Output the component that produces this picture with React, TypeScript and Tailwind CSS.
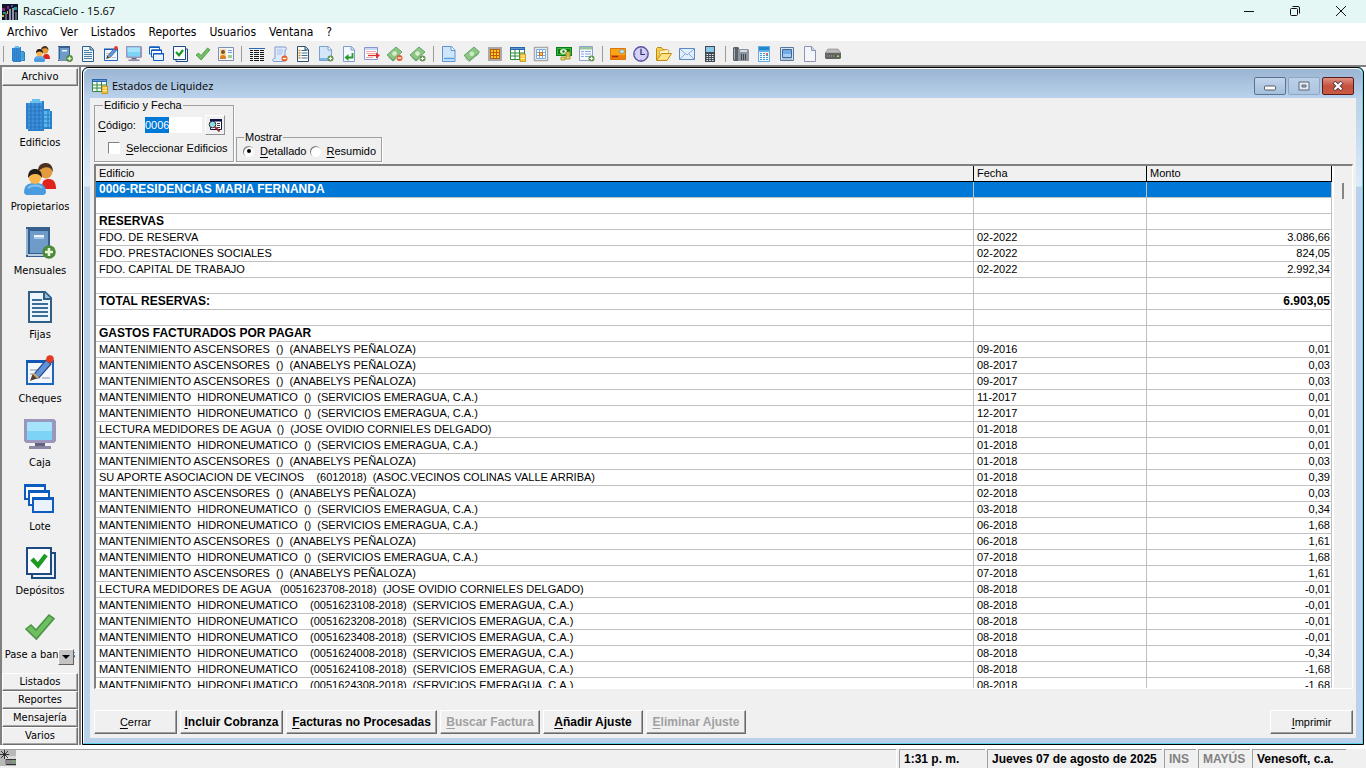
import React, { useEffect, useRef, useState } from 'react';

type IconName = keyof typeof ICONS;

// All drawings sit on a 16x16 grid; the sidebar shows them at double size
const ICONS = {
  building: (
    <>
      <path d="M1 2h2V1h1V0h4v1h2v4h3v1h1v9h-4v1H2v-1H1z" fill="#2e7fca" />
      <path d="M2 2h7v13H2z" fill="#3c93dd" />
      <path d="M4 0h4v1H4zM3 1h6v1H3z" fill="#6cc0f0" />
      <path d="M10 6h3v8h-3z" fill="#5ab8ee" />
      <path d="M2 4h7M2 6h7M2 8h7M2 10h7M2 12h7M2 14h7" stroke="#2b74bd" strokeWidth=".5" />
      <path d="M3.500 2v13M5.500 2v13M7.500 2v13" stroke="#2570b8" strokeWidth=".5" />
      <path d="M10 8h4M10 10h4M10 12h4M12 6v9" stroke="#2b7ec0" strokeWidth=".6" />
    </>
  ),
  people: (
    <>
      <path d="M9 12c0-3 1-4 3.500-4S16 10 16 13h-5z" fill="#e0231c" />
      <circle cx="11" cy="4.500" r="3.200" fill="#e39a3c" />
      <path d="M7 4c0-3 2-4 4-4s3.500 1.500 3.500 4.500c-1-2-2-2.500-4-2.300-1 .1-2 .800-3.500 1.800z" fill="#4a3222" />
      <path d="M0 15c0-4 2-5 5.500-5s5.500 1 5.500 5l-1 1H1z" fill="#4a9be0" />
      <path d="M2 12.500c1-1 2-1.300 3.500-1.300s3 .3 3.500 1.300" stroke="#86c3f0" fill="none" />
      <circle cx="5.500" cy="7.500" r="3" fill="#f9b54a" />
      <path d="M2 7.500C2 4 3.500 3 5.500 3S9 4 9 7.500C8 6 7 5.300 5.500 5.500 4 5.600 3 6 2 7.500z" fill="#231d1a" />
    </>
  ),
  book: (
    <>
      <path d="M1 0h12v15H1z" fill="#365f8f" />
      <path d="M3 2h9v11H3z" fill="#6f9bc8" />
      <path d="M1.500 1v13" stroke="#90b3d6" />
      <path d="M2 14h10" stroke="#dfe9f2" strokeWidth=".8" />
      <path d="M5 4h5v2H5z" fill="#a9c8e6" />
      <path d="M5 4.500h5" stroke="#fff" strokeWidth=".8" />
      <circle cx="12.500" cy="12.500" r="3.400" fill="#4e8a3c" />
      <path d="M12.500 10.500v4M10.500 12.500h4" stroke="#e6f7d8" strokeWidth="1.300" />
    </>
  ),
  page: (
    <>
      <path d="M2.500.5h8l3 3v12h-11z" fill="#eef6fd" stroke="#2f5f86" />
      <path d="M10 .5V4h3.500" fill="#9cc0dc" stroke="#2f5f86" />
      <path d="M4 4.500h5M4 6.500h8M4 8.500h8M4 10.500h8M4 12.500h8" stroke="#3c6d94" strokeWidth=".9" />
    </>
  ),
  write: (
    <>
      <path d="M1.500 3.500h13v11h-13z" fill="#f4f7fb" stroke="#1b64c0" />
      <path d="M1 2.500h14V4H1z" fill="#1257b5" />
      <path d="M3 7.500h5M3 9.500h3M9 11.500h4" stroke="#bcc5d0" />
      <path d="M4 12l1.500-3L11 2.500 13.500 4.500 7.500 11.300z" fill="#5f93dc" stroke="#2c4c86" strokeWidth=".6" />
      <path d="M3 13l1.300-3.500 2.500 2z" fill="#4d4035" />
      <path d="M4.700 9.300l2.300 2.200" stroke="#d9a85c" />
      <circle cx="13" cy="2" r="1.900" fill="#e23d22" />
    </>
  ),
  monitor: (
    <>
      <path d="M0 0h15l1 1v10l-1 1H1l-1-1z" fill="#9a97bd" />
      <path d="M1.500 1.500h12.500v9H1.500z" fill="#7dd3f5" />
      <path d="M1.500 1.500h12.500v4.500H1.500z" fill="#a5e4fb" />
      <path d="M5.500 12h5v1.500h-5z" fill="#65627f" />
      <path d="M2.500 13.500h11V15h-11z" fill="#8986a6" />
    </>
  ),
  windows: (
    <>
      <path d="M.5 1h10v7H.5z" fill="#fff" stroke="#0d5cc0" />
      <path d="M.5 .5h10V2H.5z" fill="#0d5cc0" />
      <path d="M2.500 4h10v7h-10z" fill="#fff" stroke="#0d5cc0" />
      <path d="M2.500 3.500h10V5h-10z" fill="#0d5cc0" />
      <path d="M4.500 7.500h10v7h-10z" fill="#eaf3fd" stroke="#0d5cc0" />
      <path d="M4 7h11v1.500H4z" fill="#0d5cc0" />
    </>
  ),
  deposit: (
    <>
      <path d="M4 3h11.500v12.500H4z" fill="#eef3f8" stroke="#1d4a80" />
      <path d="M1.500.5h12v13h-12z" fill="#fafcfe" stroke="#1d4a80" />
      <path d="M4 6l3 3.200L11 4" fill="none" stroke="#1d9a22" strokeWidth="2.200" />
    </>
  ),
  check: <path d="M1 9l2.500-2L6 9.500 12.500 2 15 3.800 6.200 14z" fill="#6fbf62" stroke="#4b9445" strokeWidth=".8" />,
  idcard: (
    <>
      <path d="M.5 1.500h15v13H.5z" fill="#f3f6fb" stroke="#7c8fae" />
      <path d="M2 3h6v10H2z" fill="#f5d99a" />
      <circle cx="5" cy="6" r="2" fill="#7a5132" />
      <path d="M2 13c0-3 1-4 3-4s3 1 3 4z" fill="#dd7f1d" />
      <path d="M10 4.500h4M10 6.500h4" stroke="#6da2d8" />
      <path d="M10 9h4v3h-4z" fill="#9ecf84" />
    </>
  ),
  grid: (
    <>
      <path d="M0 2.500h16" stroke="#2c69b5" />
      <path d="M1 4.500h3M5 4.500h5M11 4.500h4M1 6.500h3M5 6.500h5M11 6.500h4M1 8.500h3M5 8.500h5M11 8.500h4M1 10.500h3M5 10.500h5M11 10.500h4M1 12.500h3M5 12.500h5M11 12.500h4M1 14.500h3M5 14.500h5M11 14.500h4" stroke="#16171c" />
    </>
  ),
  scroll: (
    <>
      <path d="M3 1h10c2 0 2 3 0 3v9c0 2-1 2.500-3 2.500H2c-2 0-1.500-3 .5-3H3z" fill="#dfeafc" stroke="#7f9cd0" />
      <path d="M5 4h6M5 6h6M5 8h5" stroke="#a9c0e8" />
      <circle cx="12.500" cy="12.500" r="3" fill="#e0622b" />
      <path d="M10.700 12.500h3.600" stroke="#fff" strokeWidth="1.300" />
    </>
  ),
  list: (
    <>
      <path d="M2.500.5h8l3 3v12h-11z" fill="#fff" stroke="#30506f" />
      <path d="M10 .5V4h3.500" fill="#b3cde2" stroke="#30506f" />
      <path d="M3.500 4.500h2M3.500 7h2M3.500 9.500h2M3.500 12h2" stroke="#d5882b" strokeWidth="1.300" />
      <path d="M6.500 4.500h5M6.500 7h6M6.500 9.500h6M6.500 12h6" stroke="#3c6d94" />
    </>
  ),
  pageAdd: (
    <>
      <path d="M1.500.5h9l3 3v11h-12z" fill="#d3e6fa" stroke="#7c9fcb" />
      <path d="M10 .5V4h3.500" fill="#fff" stroke="#7c9fcb" />
      <path d="M2 12h9v2H2z" fill="#7db8ec" />
      <circle cx="12.500" cy="12.500" r="3" fill="#5d9348" />
      <path d="M12.500 10.700v3.600M10.700 12.500h3.600" stroke="#fff" strokeWidth="1.200" />
    </>
  ),
  pageArrow: (
    <>
      <path d="M2.500.5h8l3 3v12h-11z" fill="#f5f9fe" stroke="#7c9fcb" />
      <path d="M10 .5V4h3.500" fill="#cfe0f4" stroke="#7c9fcb" />
      <path d="M11.500 7v4.500H7" fill="none" stroke="#259a2e" strokeWidth="1.800" />
      <path d="M3.500 11.500l4-3.500v7z" fill="#259a2e" />
    </>
  ),
  sheetArrow: (
    <>
      <path d="M.5 1.500h13v12H.5z" fill="#fff" stroke="#8795d4" />
      <path d="M1 2h12v2H1z" fill="#cbd5f4" />
      <path d="M2 5.500h10M2 7.500h10M2 11.500h7" stroke="#f0a7a2" />
      <path d="M4 9.500h9" stroke="#e12f2c" strokeWidth="1.300" />
      <path d="M12 6.500l4 3-4 3z" fill="#e12f2c" />
    </>
  ),
  moneyMinus: (
    <>
      <path d="M0 9L9 1l6 5-9 8z" fill="#8dc683" stroke="#4f9657" strokeWidth=".8" />
      <circle cx="7.500" cy="7.500" r="2.300" fill="#d7efcf" />
      <path d="M1.500 11L6 15l3-2.500" fill="none" stroke="#5a9f5f" />
      <circle cx="12.500" cy="12" r="3" fill="#e0622b" />
      <path d="M10.700 12h3.600" stroke="#fff" strokeWidth="1.300" />
    </>
  ),
  moneyPlus: (
    <>
      <path d="M0 9L9 1l6 5-9 8z" fill="#8dc683" stroke="#4f9657" strokeWidth=".8" />
      <circle cx="7.500" cy="7.500" r="2.300" fill="#d7efcf" />
      <path d="M1.500 11L6 15l3-2.500" fill="none" stroke="#5a9f5f" />
      <circle cx="12.500" cy="12.500" r="3" fill="#5d9348" />
      <path d="M12.500 10.700v3.600M10.700 12.500h3.600" stroke="#fff" strokeWidth="1.200" />
    </>
  ),
  bluePage: (
    <>
      <path d="M1.500.5h9l3.500 3.500v11.500H1.500z" fill="#cfe5fb" stroke="#5f93cf" />
      <path d="M10 .5v4h4" fill="#f4faff" stroke="#5f93cf" />
      <path d="M3 12.500h10" stroke="#4ea4e8" strokeWidth="1.500" />
    </>
  ),
  money: (
    <>
      <path d="M0 9.500L10 1l5.500 5L5.500 14.500z" fill="#8dc683" stroke="#4f9657" strokeWidth=".8" />
      <circle cx="7.800" cy="7.800" r="2.400" fill="#cbe9c2" />
      <path d="M1.500 12L5 15.500l10-8" fill="none" stroke="#6fb070" />
    </>
  ),
  goldGrid: (
    <>
      <path d="M1 1h14v14H1z" fill="#a9a9a9" />
      <path d="M3 3h10v10H3z" fill="#ffc928" />
      <path d="M3 3.500h10M3 6.500h10M3 9.500h10M3 12.500h10M3.500 3v10M6.500 3v10M9.500 3v10M12.500 3v10" stroke="#bd5f08" />
    </>
  ),
  tableGold: (
    <>
      <path d="M0 1h15v13H0z" fill="#fff" />
      <path d="M0 1h15v3H0z" fill="#2a66b0" />
      <path d="M1 2.500h13" stroke="#6ba0dc" strokeWidth=".8" />
      <path d="M.5 4v9.500h10M.5 7h14M.5 10h10M5 4v10M9.500 4v10M14.500 4v4" fill="none" stroke="#2b8a3e" />
      <path d="M10 8h5.500v7.500H10z" fill="#f6c531" stroke="#b8831a" strokeWidth=".7" />
      <path d="M10.500 10h4.500M10.500 12.500h4.500" stroke="#fff0a8" />
    </>
  ),
  blueGrid: (
    <>
      <path d="M1.500 1.500h13v13h-13z" fill="#fff" stroke="#a9a9a9" strokeWidth="1.500" />
      <path d="M3.500 3.500h9v9h-9zM6.500 3v10M9.500 3v10M3 6.500h10M3 9.500h10" fill="none" stroke="#70aee8" />
      <path d="M6.500 6.500h3v3h-3z" fill="#ffd35a" stroke="#d4641a" />
    </>
  ),
  cash: (
    <>
      <path d="M0 1h16v9H0z" fill="#0b7d14" />
      <path d="M1.500 2.500h13v6h-13z" fill="none" stroke="#4fc552" strokeWidth=".8" />
      <ellipse cx="7.500" cy="5.500" rx="3.500" ry="2.500" fill="#e5f5d4" />
      <circle cx="7.500" cy="5.500" r="1.200" fill="#197f1d" />
      <path d="M10 6h4v7h-4zM5 11h4v3H5z" fill="#f0dc69" stroke="#948018" strokeWidth=".8" />
      <path d="M10 8h4M10 10h4" stroke="#948018" strokeWidth=".7" />
    </>
  ),
  sheetAdd: (
    <>
      <path d="M.5.5h13v14H.5z" fill="#f6faff" stroke="#8da5cd" />
      <path d="M1 1h12v2.500H1z" fill="#9bc49d" />
      <path d="M2 5.500h3M6 5.500h6M2 8h3M6 8h6M2 10.500h3M6 10.500h4" stroke="#8aa9de" />
      <circle cx="12.500" cy="12.500" r="3" fill="#5d9348" />
      <path d="M12.500 10.700v3.600M10.700 12.500h3.600" stroke="#fff" strokeWidth="1.200" />
    </>
  ),
  card: (
    <>
      <path d="M.5 2.500h15v11H.5z" fill="#fba51b" stroke="#d97806" />
      <path d="M1 9h14v4H1z" fill="#ee7f0b" />
      <path d="M10 4h4v3h-4z" fill="#d6f0ff" stroke="#5d9ab5" strokeWidth=".7" />
      <path d="M2 10.500h6" stroke="#a82c06" strokeWidth="1.500" />
    </>
  ),
  clock: (
    <>
      <circle cx="8" cy="8" r="7.200" fill="#d5d0f6" stroke="#5a559c" strokeWidth="1.400" />
      <path d="M8 3v5.500h4" fill="none" stroke="#2e2a6c" strokeWidth="1.200" />
      <path d="M8 1.500v1M8 13.500v1M1.500 8h1M13.500 8h1" stroke="#6863ae" />
    </>
  ),
  folder: (
    <>
      <path d="M.5 14V2.500l1-1h4l1.500 2h4V7" fill="#f6cf52" stroke="#c08a12" />
      <path d="M3 5l8-1.500 2 1L12 9H4z" fill="#fff4c5" stroke="#c99a29" strokeWidth=".7" />
      <path d="M.5 14.500l5-7H15.500l-4.500 7z" fill="#fde383" stroke="#c08a12" />
    </>
  ),
  mail: (
    <>
      <path d="M.5 2.500h15v11H.5z" fill="#e3effd" stroke="#5b88c8" />
      <path d="M1 3l7 6 7-6M1 13l5-5M15 13l-5-5" fill="none" stroke="#82a8dc" />
    </>
  ),
  mobile: (
    <>
      <path d="M3 0h10v16H3z" fill="#3e4952" />
      <path d="M4 1h8v5H4z" fill="#8bc9e9" />
      <path d="M4.500 8.500h7M4.500 10.500h7M4.500 12.500h7M4.500 14.500h7" stroke="#e8eef2" strokeDasharray="1.600 1.100" />
    </>
  ),
  phone: (
    <>
      <path d="M0 2l1-1h4l1 1v12l-1 1H1l-1-1z" fill="#5a6168" />
      <path d="M1.500 2.500v11" stroke="#a5adb4" />
      <path d="M5 3h10l1 1v11H5z" fill="#8d969e" />
      <path d="M7 4h7v2H7z" fill="#d3dce2" />
      <path d="M8.500 8v6M10.500 8v6M12.500 8v6" stroke="#41494f" />
    </>
  ),
  calc: (
    <>
      <path d="M2 0h12v16H2z" fill="#65aee4" />
      <path d="M3 1h10v3H3z" fill="#2087cd" />
      <path d="M3 6h10v9H3z" fill="#edf6fd" />
      <path d="M4 7.500h9M4 9.500h9M4 11.500h9M4 13.500h9" stroke="#4a98d3" strokeDasharray="2 1" />
      <path d="M10 7h2v2h-2z" fill="#e8673d" />
    </>
  ),
  screen: (
    <>
      <path d="M1.500 1.500h13v13h-13z" fill="#d8e3ef" stroke="#57779e" />
      <path d="M3.500 3.500h9v8h-9z" fill="#72aae3" stroke="#3d679a" />
      <path d="M4 8h8v3H4z" fill="#a6cef2" />
      <path d="M3 13h10" stroke="#8ea5bf" />
    </>
  ),
  blank: (
    <>
      <path d="M2.500.5h7l4 4v11h-11z" fill="#f3f5fb" stroke="#8d94b2" />
      <path d="M9.500.5v4h4" fill="#d0d7ea" stroke="#8d94b2" />
    </>
  ),
  drive: (
    <>
      <path d="M3 3h10l3 4H0z" fill="#bcbcbc" stroke="#858585" strokeWidth=".6" />
      <path d="M0 7h16v5l-1 1H1l-1-1z" fill="#62655f" />
      <path d="M2 10h7" stroke="#a7aaa2" strokeDasharray="1 1" />
      <path d="M12 9.500h2v1.500h-2z" fill="#94e45d" />
    </>
  ),
};

const Icon = ({ name, className }: { name: IconName; className?: string }) => (
  <svg viewBox="0 0 16 16" className={className ?? 'size-4'} aria-hidden="true">
    {ICONS[name]}
  </svg>
);

const MENU = ['Archivo', 'Ver', 'Listados', 'Reportes', 'Usuarios', 'Ventana', '?'];

const TOOLBAR: IconName[][] = [
  ['building', 'people', 'book', 'page', 'write', 'monitor', 'windows', 'deposit', 'check', 'idcard'],
  ['grid', 'scroll', 'list', 'pageAdd', 'pageArrow', 'sheetArrow', 'moneyMinus', 'moneyPlus'],
  ['bluePage', 'money', 'goldGrid', 'tableGold', 'blueGrid', 'cash', 'sheetAdd'],
  ['card', 'clock', 'folder', 'mail', 'mobile'],
  ['phone', 'calc', 'screen', 'blank', 'drive'],
];

const SIDEBAR: { icon: IconName; label: string }[] = [
  { icon: 'building', label: 'Edificios' },
  { icon: 'people', label: 'Propietarios' },
  { icon: 'book', label: 'Mensuales' },
  { icon: 'page', label: 'Fijas' },
  { icon: 'write', label: 'Cheques' },
  { icon: 'monitor', label: 'Caja' },
  { icon: 'windows', label: 'Lote' },
  { icon: 'deposit', label: 'Depósitos' },
  { icon: 'check', label: 'Pase a bancos' },
];

interface Row {
  text: string;
  date?: string;
  amount?: string;
  bold?: boolean;
}

const ASC = 'MANTENIMIENTO ASCENSORES  ()  (ANABELYS PEÑALOZA)';
const HID = 'MANTENIMIENTO  HIDRONEUMATICO  ()  (SERVICIOS EMERAGUA, C.A.)';
const hid = (doc: string) => `MANTENIMIENTO  HIDRONEUMATICO    (${doc})  (SERVICIOS EMERAGUA, C.A.)`;

const ROWS: Row[] = [
  { text: '0006-RESIDENCIAS MARIA FERNANDA', bold: true },
  { text: '' },
  { text: 'RESERVAS', bold: true },
  { text: 'FDO. DE RESERVA', date: '02-2022', amount: '3.086,66' },
  { text: 'FDO. PRESTACIONES SOCIALES', date: '02-2022', amount: '824,05' },
  { text: 'FDO. CAPITAL DE TRABAJO', date: '02-2022', amount: '2.992,34' },
  { text: '' },
  { text: 'TOTAL RESERVAS:', amount: '6.903,05', bold: true },
  { text: '' },
  { text: 'GASTOS FACTURADOS POR PAGAR', bold: true },
  { text: ASC, date: '09-2016', amount: '0,01' },
  { text: ASC, date: '08-2017', amount: '0,03' },
  { text: ASC, date: '09-2017', amount: '0,03' },
  { text: HID, date: '11-2017', amount: '0,01' },
  { text: HID, date: '12-2017', amount: '0,01' },
  { text: 'LECTURA MEDIDORES DE AGUA  ()  (JOSE OVIDIO CORNIELES DELGADO)', date: '01-2018', amount: '0,01' },
  { text: HID, date: '01-2018', amount: '0,01' },
  { text: ASC, date: '01-2018', amount: '0,03' },
  { text: 'SU APORTE ASOCIACION DE VECINOS    (6012018)  (ASOC.VECINOS COLINAS VALLE ARRIBA)', date: '01-2018', amount: '0,39' },
  { text: ASC, date: '02-2018', amount: '0,03' },
  { text: HID, date: '03-2018', amount: '0,34' },
  { text: HID, date: '06-2018', amount: '1,68' },
  { text: ASC, date: '06-2018', amount: '1,61' },
  { text: HID, date: '07-2018', amount: '1,68' },
  { text: ASC, date: '07-2018', amount: '1,61' },
  { text: 'LECTURA MEDIDORES DE AGUA   (0051623708-2018)  (JOSE OVIDIO CORNIELES DELGADO)', date: '08-2018', amount: '-0,01' },
  { text: hid('0051623108-2018'), date: '08-2018', amount: '-0,01' },
  { text: hid('0051623208-2018'), date: '08-2018', amount: '-0,01' },
  { text: hid('0051623408-2018'), date: '08-2018', amount: '-0,01' },
  { text: hid('0051624008-2018'), date: '08-2018', amount: '-0,34' },
  { text: hid('0051624108-2018'), date: '08-2018', amount: '-1,68' },
  { text: hid('0051624308-2018'), date: '08-2018', amount: '-1,68' },
];

const ACTIONS = [
  { label: 'Cerrar', width: 'w-[83px]' },
  { label: 'Incluir Cobranza', width: 'w-[103px]', bold: true },
  { label: 'Facturas no Procesadas', width: 'w-[151px]', bold: true },
  { label: 'Buscar Factura', width: 'w-[100px]', bold: true, disabled: true },
  { label: 'Añadir Ajuste', width: 'w-[100px]', bold: true },
  { label: 'Eliminar Ajuste', width: 'w-[100px]', bold: true, disabled: true },
];

// Underlines the accelerator letter
const Hot = ({ text }: { text: string }) => (
  <>
    <span className="underline underline-offset-2">{text[0]}</span>
    {text.slice(1)}
  </>
);

const PushButton = ({ label, width, bold, disabled }: { label: string; width: string; bold?: boolean; disabled?: boolean }) => (
  <button
    disabled={disabled}
    className={`h-6 shrink-0 whitespace-nowrap border border-t-white border-l-white border-r-[#696969] border-b-[#696969] bg-[#f0f0f0] shadow-[inset_-1px_-1px_0_#a0a0a0] ${width} ${
      bold ? 'text-xs font-bold' : 'text-[11px]'
    } ${disabled ? 'text-[#a0a0a0]' : 'text-black'}`}
  >
    <Hot text={label} />
  </button>
);

const SideTab = ({ label }: { label: string }) => (
  <button className="h-[18px] w-full shrink-0 border border-t-white border-l-white border-r-[#6f6f6f] border-b-[#6f6f6f] text-center leading-4 shadow-[inset_-1px_-1px_0_#a8a8a8]">
    {label}
  </button>
);

function TitleBar() {
  return (
    <header className="flex h-[23px] shrink-0 items-center bg-[#e4f7f5] pl-0.5 font-['Open_Sans',sans-serif] text-[11px]">
      <svg viewBox="0 0 16 16" className="mr-[5px] size-4" shapeRendering="crispEdges" aria-hidden="true">
        <path d="M0 0h16v16H0z" fill="#15142a" />
        <path d="M0 4h3v3H0zM5 2h2v3H5z" fill="#7d2a86" />
        <path d="M1 8h3v2H1zM12 3h3v3h-3z" fill="#1f9a8f" />
        <path d="M7 5h2v11H7zM10 4h2v12h-2z" fill="#8d94a6" />
        <path d="M3 9h2v7H3zM13 8h2v8h-2z" fill="#5c6170" />
        <path d="M0 11h2v2H0zM5 7h1v3H5z" fill="#d2b93a" />
        <path d="M9 1h2v2H9z" fill="#2c50c0" />
      </svg>
      <h1>RascaCielo - 15.67</h1>
      <div className="ml-auto flex h-full items-center pr-0.5 pb-0.5">
        <button aria-label="Minimizar" className="flex w-[46px] justify-center">
          <svg viewBox="0 0 12 12" className="size-3"><path d="M1 6.500h10" stroke="#111" /></svg>
        </button>
        <button aria-label="Restaurar" className="flex w-[46px] justify-center">
          <svg viewBox="0 0 12 12" className="size-3" fill="none" stroke="#111">
            <rect x="1.500" y="3.500" width="7" height="7" rx="1" />
            <path d="M3.500 1.500h5.500a1.500 1.500 0 0 1 1.500 1.500v5.500" />
          </svg>
        </button>
        <button aria-label="Cerrar aplicación" className="flex w-[46px] justify-center">
          <svg viewBox="0 0 12 12" className="size-3"><path d="M1 1l10 10M11 1L1 11" stroke="#111" /></svg>
        </button>
      </div>
    </header>
  );
}

function Sidebar() {
  return (
    <aside className="flex w-[78px] shrink-0 flex-col border-l-2 border-[#808080] pt-px">
      <SideTab label="Archivo" />
      <div className="relative flex min-h-0 flex-1 flex-col overflow-hidden pt-[13px]">
        {SIDEBAR.map(item => (
          <button key={item.label} className="flex h-16 shrink-0 flex-col items-center whitespace-nowrap">
            <Icon name={item.icon} className="size-8" />
            <span className="mt-1 leading-4">{item.label}</span>
          </button>
        ))}
        <button
          aria-label="Desplazar"
          className="absolute right-1 bottom-2 flex size-4 items-center justify-center border border-t-white border-l-white border-r-[#606060] border-b-[#606060] bg-[#c4c4c4]"
        >
          <svg viewBox="0 0 8 4" className="h-1 w-2"><path d="M0 0h8L4 4z" /></svg>
        </button>
      </div>
      <SideTab label="Listados" />
      <SideTab label="Reportes" />
      <SideTab label="Mensajería" />
      <SideTab label="Varios" />
    </aside>
  );
}

function Filters() {
  const codeRef = useRef<HTMLInputElement>(null);
  const [code, setCode] = useState('0006');
  const [mode, setMode] = useState('Detallado');

  useEffect(() => {
    codeRef.current?.focus();
    codeRef.current?.select();
  }, []);

  return (
    <div className="flex items-end gap-0.5 pt-px">
      <fieldset className="h-[63px] w-[140px] border border-[#a0a0a0] shadow-[1px_1px_0_#fff]">
        <legend className="ml-2 px-px leading-[13px]">Edificio y Fecha</legend>
        <div className="mt-[3px] flex h-5 items-center pl-[3px]">
          <label htmlFor="codigo" className="w-[47px]"><Hot text="Código:" /></label>
          <input
            id="codigo"
            ref={codeRef}
            value={code}
            onChange={e => setCode(e.target.value)}
            className="h-4 w-[57px] bg-white outline-none selection:bg-[#0078d7] selection:text-white"
          />
          <button
            aria-label="Buscar edificio"
            className="ml-[3px] flex size-5 items-center justify-center border border-t-white border-l-white border-r-[#909090] border-b-[#909090]"
          >
            <svg viewBox="0 0 14 14" className="size-3.5" aria-hidden="true">
              <path d="M2.500 1.500h11v10h-11z" fill="#fff" stroke="#10104a" />
              <path d="M2 1h12v2.500H2z" fill="#10104a" />
              <path d="M9 5.500h3M9 7.500h3M9 9.500h3" stroke="#444" />
              <circle cx="4.500" cy="6.500" r="3.300" fill="#8fdde2" stroke="#333" />
              <path d="M7 9l4.500 4.500" stroke="#a32222" strokeWidth="1.800" />
            </svg>
          </button>
        </div>
        <label className="mt-[5px] flex h-4 items-center gap-1.5 pl-[13px]">
          <input
            type="checkbox"
            className="size-3 appearance-none border border-t-[#808080] border-l-[#808080] border-r-white border-b-white bg-white checked:bg-[#0078d7]"
          />
          <span><Hot text="Seleccionar Edificios" /></span>
        </label>
      </fieldset>
      <fieldset className="h-[31px] w-[146px] border border-[#a0a0a0] shadow-[1px_1px_0_#fff]">
        <legend className="ml-[7px] px-px leading-[13px]">Mostrar</legend>
        <div className="flex h-3.5 items-center gap-[3px] pl-1.5">
          {['Detallado', 'Resumido'].map(option => (
            <label key={option} className="flex items-center gap-1.5">
              <input
                type="radio"
                name="mostrar"
                checked={mode === option}
                onChange={() => setMode(option)}
                className="flex size-[11px] appearance-none items-center justify-center rounded-full bg-white shadow-[inset_1px_1px_0_#808080] before:size-1 before:rounded-full before:bg-transparent checked:before:bg-black"
              />
              <span><Hot text={option} /></span>
            </label>
          ))}
        </div>
      </fieldset>
    </div>
  );
}

function Grid() {
  const [selected, setSelected] = useState(0);

  return (
    <div className="mt-0.5 flex min-h-0 flex-1 overflow-hidden border-t-2 border-r border-b border-l-2 border-t-[#808080] border-l-[#808080] border-r-white border-b-white">
      <div className="min-w-0 flex-1 overflow-hidden bg-white">
        <table className="w-full table-fixed border-separate border-spacing-0 text-left">
          <colgroup>
            <col />
            <col className="w-[173px]" />
            <col className="w-[185px]" />
          </colgroup>
          <thead>
            <tr>
              {['Edificio', 'Fecha', 'Monto'].map(title => (
                <th key={title} className="h-4 border-r border-b border-black bg-[#f0f0f0] px-[3px] leading-[15px] font-normal">
                  {title}
                </th>
              ))}
            </tr>
          </thead>
          <tbody>
            {ROWS.map((row, i) => (
              <tr
                key={i}
                onClick={() => setSelected(i)}
                className={`${i === selected ? 'bg-[#0078d7] text-white' : ''} ${row.bold ? 'text-xs font-bold' : ''}`}
              >
                <td className="h-4 overflow-hidden border-r border-b border-[#c0c0c0] pl-[3px] leading-[15px] whitespace-pre">{row.text}</td>
                <td className="border-r border-b border-[#c0c0c0] pl-[3px] leading-[15px]">{row.date}</td>
                <td className="border-r border-b border-[#c0c0c0] pr-px text-right leading-[15px]">{row.amount}</td>
              </tr>
            ))}
          </tbody>
        </table>
      </div>
      {/* Thin overlay-style scroll bar */}
      <div className="flex w-5 shrink-0 justify-center border-l-2 border-white bg-[#f0f0f0] pt-[17px]">
        <div className="h-4 w-0.5 bg-[#858585]" />
      </div>
    </div>
  );
}

const CAPTION = 'flex h-[18px] w-8 items-center justify-center rounded-[2px] border';

function LiquidityWindow() {
  return (
    <section className="flex min-w-0 flex-1 flex-col rounded-t-md border border-black bg-[#5fd0e6]">
      <div className="mr-px mb-px flex min-h-0 flex-1 flex-col rounded-t-md border-t border-l border-white bg-[linear-gradient(#9ab4d2_0,#b9d1ea_28px,#dcebf9_117px,#b9d1ea_118px)]">
        <div className="flex h-[29px] shrink-0 items-center px-2 pt-1 font-['Open_Sans',sans-serif]">
          <Icon name="tableGold" />
          <h2 className="ml-1 pt-0.5 text-[11px]">Estados de Liquidez</h2>
          <div className="ml-auto flex gap-0.5">
            <button aria-label="Minimizar ventana" className={`${CAPTION} border-[#5b7390] bg-linear-to-b from-[#c3d6ec] to-[#a3bddb]`}>
              <svg viewBox="0 0 12 6" className="mt-1 h-1.5 w-3"><rect x=".5" y="1" width="11" height="4" rx="1" fill="#fff" stroke="#555c68" /></svg>
            </button>
            <button aria-label="Maximizar ventana" className={`${CAPTION} border-[#8da6c4] bg-linear-to-b from-[#bcd1e9] to-[#abc4e0]`}>
              <svg viewBox="0 0 12 10" className="h-2.5 w-3">
                <path d="M1 1h10v8H1z" fill="#e4ebf3" stroke="#5c6777" />
                <path d="M4 4h4v2H4z" fill="#aac0da" stroke="#5c6777" />
              </svg>
            </button>
            <button aria-label="Cerrar ventana" className={`${CAPTION} border-[#5a1a1c] bg-linear-to-b from-[#dd9184] via-[#c4513c] to-[#cb5a42]`}>
              <svg viewBox="0 0 12 10" className="h-2.5 w-3">
                <path d="M2 1l8 8M10 1L2 9" stroke="#5c3b40" strokeWidth="4" />
                <path d="M2.500 1.500l7 7M9.500 1.500l-7 7" stroke="#fff" strokeWidth="2.200" />
              </svg>
            </button>
          </div>
        </div>
        <div className="mx-1.5 mb-[5px] flex min-h-0 flex-1 flex-col bg-[#f0f0f0] pr-[3px] pb-1 pl-1 font-['Liberation_Sans',Arial,sans-serif] text-[11px]">
          <Filters />
          <Grid />
          <div className="mt-[21px] flex gap-[3px]">
            {ACTIONS.map(action => (
              <PushButton key={action.label} {...action} />
            ))}
            <div className="flex-1" />
            <PushButton label="Imprimir" width="w-[83px]" />
          </div>
        </div>
      </div>
    </section>
  );
}

const PANEL = 'h-full shrink-0 border-t border-l border-[#a0a0a0] pl-1 leading-[18px]';

function StatusBar() {
  return (
    <footer className="flex h-[19px] shrink-0 gap-0.5 pr-5 font-['Liberation_Sans',Arial,sans-serif] text-xs font-bold">
      <div className="flex-1 border-t border-r border-t-[#a0a0a0] border-r-white">
        <svg viewBox="0 0 16 16" className="size-4" aria-hidden="true">
          <path d="M0 0h16v16H0z" fill="#b8b8b8" />
          <path d="M5 6h11v3H5z" fill="#d8d8d8" />
          <path d="M5 9h11v5H5z" fill="#8a8a8a" />
          <path d="M6 9.500h10M6 14.500h10" stroke="#333" />
          <path d="M12 11h3v1h-3z" fill="#58d03c" />
          <path d="M1 1l7 7M8 1L1 8M4.500 0v9M0 4.500h9" stroke="#111" strokeWidth=".8" />
        </svg>
      </div>
      <div className={`${PANEL} w-[86px]`}>1:31 p. m.</div>
      <div className={`${PANEL} w-[175px] whitespace-nowrap`}>Jueves 07 de agosto de 2025</div>
      <div className={`${PANEL} w-8 text-[#808080]`}>INS</div>
      <div className={`${PANEL} w-[52px] text-[#808080]`}>MAYÚS</div>
      <div className={`${PANEL} w-[94px]`}>Venesoft, c.a.</div>
    </footer>
  );
}

export default function App() {
  return (
    <div className="flex h-screen flex-col overflow-hidden bg-[#f0f0f0] font-['DejaVu_Sans_Condensed','Open_Sans',sans-serif] text-[11px] text-black">
      <TitleBar />
      <nav className="flex h-[18px] shrink-0 items-center gap-px bg-white pl-px text-xs">
        {MENU.map(item => (
          <button key={item} className="px-1.5 leading-[18px]">{item}</button>
        ))}
      </nav>
      <div className="flex h-6 shrink-0 items-center pt-0.5 pl-[3px]">
        {TOOLBAR.map((group, i) => (
          <div key={i} className="flex items-center">
            <div className={`h-4 border-l border-[#9a9a9a] ${i === 0 ? 'w-1' : 'ml-1 w-1'}`} />
            {group.map(name => (
              <button key={name} aria-label={name} className="flex w-[23px] justify-center">
                <Icon name={name} />
              </button>
            ))}
          </div>
        ))}
      </div>
      <main className="flex min-h-0 flex-1 border-t-2 border-[#808080]">
        <Sidebar />
        <div className="ml-px flex min-w-0 flex-1 border-l-2 border-[#808080] bg-white pr-0.5 pl-px">
          <LiquidityWindow />
        </div>
      </main>
      <div className="h-1 shrink-0 bg-white" />
      <StatusBar />
    </div>
  );
}
